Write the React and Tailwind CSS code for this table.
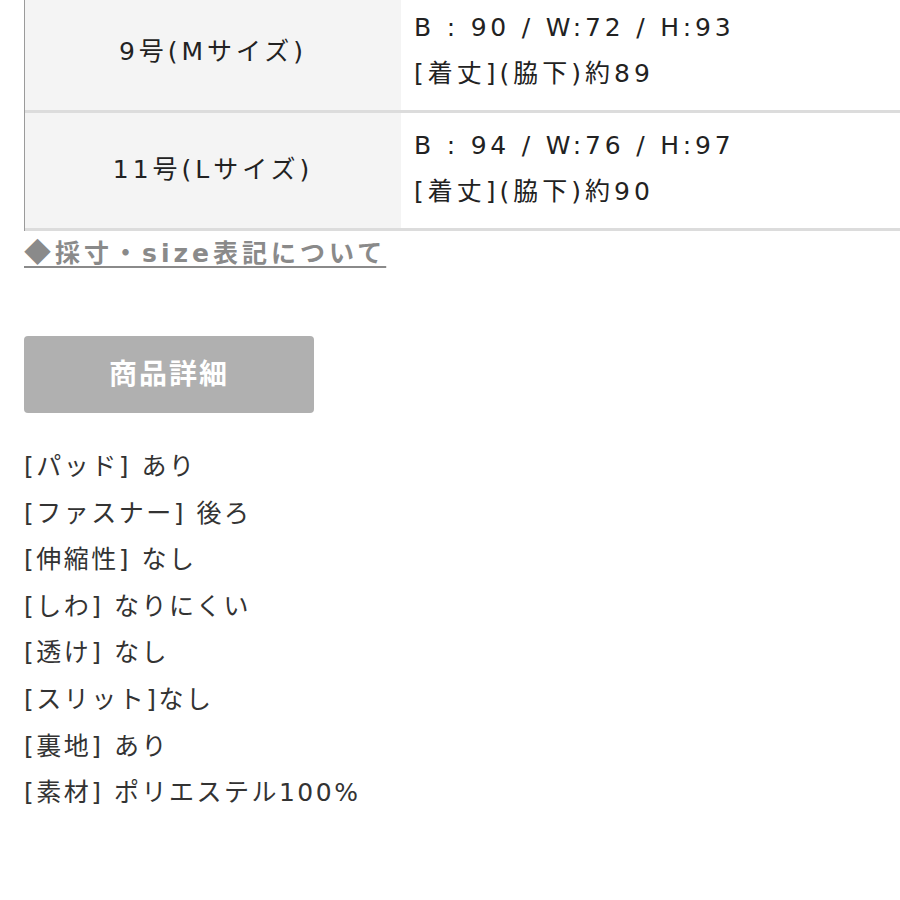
import React from 'react';

const sizes = [
    { label: '9号(Mサイズ)', bwh: 'B : 90 / W:72 / H:93', length: '[着丈](脇下)約89' },
    { label: '11号(Lサイズ)', bwh: 'B : 94 / W:76 / H:97', length: '[着丈](脇下)約90' },
];

const details = [
    '[パッド] あり',
    '[ファスナー] 後ろ',
    '[伸縮性] なし',
    '[しわ] なりにくい',
    '[透け] なし',
    '[スリット]なし',
    '[裏地] あり',
    '[素材] ポリエステル100%',
];

export default function App() {
    return (
        <div className="w-[900px] h-[900px] overflow-hidden bg-white text-[#222] font-['DejaVu_Sans','Noto_Sans_CJK_JP',sans-serif]">
            {/* Size table */}
            <div className="ml-[24px] -mt-[5px] border-l border-[#9a9a9a]">
                {sizes.map(s => (
                    <div key={s.label} className="flex h-[118px] border-b-[3px] border-[#dcdcdc]">
                        <div className="w-[376px] bg-[#f4f4f4] flex items-center justify-center pb-[2px] text-[25px] tracking-[4px]">
                            {s.label}
                        </div>
                        <div className="flex-1 pl-[13px] pt-[10px] text-[25px] leading-[46px]">
                            <p className="tracking-[3.8px]">{s.bwh}</p>
                            <p className="tracking-[4px]">{s.length}</p>
                        </div>
                    </div>
                ))}
            </div>

            <a className="ml-[24px] inline-block text-[25px] font-bold text-[#8a8a8a] underline underline-offset-[4px] decoration-[2px] tracking-[4px] leading-[40px]">
                <span className="font-['Noto_Sans_CJK_JP'] text-[27px]">◆</span>採寸・size表記について
            </a>

            {/* Product details */}
            <div className="ml-[24px] mt-[62px] w-[290px] h-[77px] rounded-[4px] bg-[#b0b0b0] flex items-center justify-center text-white text-[28px] font-bold tracking-[2px]">
                商品詳細
            </div>

            <ul className="ml-[24px] mt-[31px] text-[25px] leading-[46.6px] text-[#333] tracking-[2.5px]">
                {details.map(d => (
                    <li key={d}>{d}</li>
                ))}
            </ul>
        </div>
    );
}
